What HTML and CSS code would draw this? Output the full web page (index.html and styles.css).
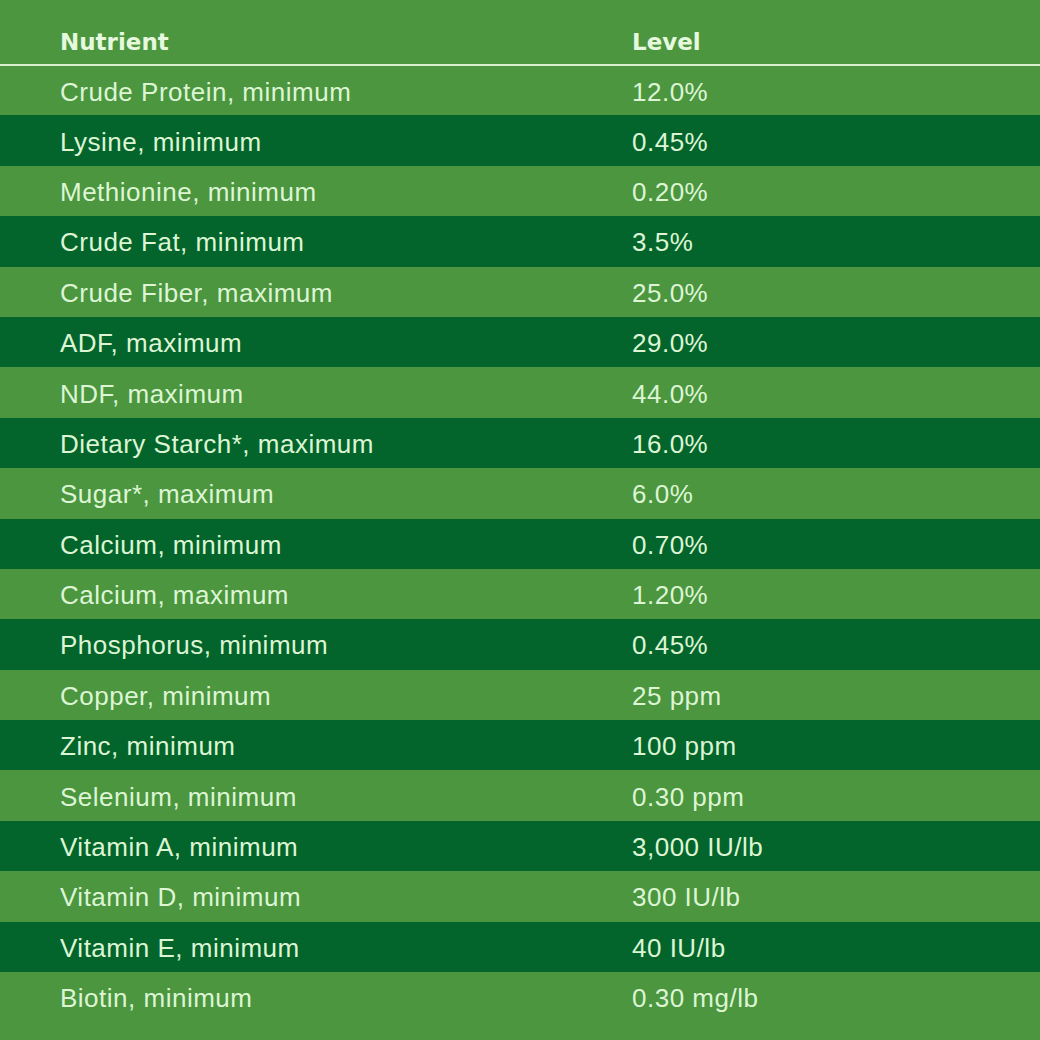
FILE: index.html
```html
<!DOCTYPE html>
<html>
<head>
<meta charset="utf-8">
<link rel="stylesheet" href="styles.css">
</head>
<body>
<table class="nutrients">
  <thead>
    <tr><th class="col-name">Nutrient</th><th class="col-level">Level</th></tr>
  </thead>
  <tbody>
    <tr><td class="col-name">Crude Protein, minimum</td><td class="col-level">12.0%</td></tr>
    <tr><td class="col-name">Lysine, minimum</td><td class="col-level">0.45%</td></tr>
    <tr><td class="col-name">Methionine, minimum</td><td class="col-level">0.20%</td></tr>
    <tr><td class="col-name">Crude Fat, minimum</td><td class="col-level">3.5%</td></tr>
    <tr><td class="col-name">Crude Fiber, maximum</td><td class="col-level">25.0%</td></tr>
    <tr><td class="col-name">ADF, maximum</td><td class="col-level">29.0%</td></tr>
    <tr><td class="col-name">NDF, maximum</td><td class="col-level">44.0%</td></tr>
    <tr><td class="col-name">Dietary Starch*, maximum</td><td class="col-level">16.0%</td></tr>
    <tr><td class="col-name">Sugar*, maximum</td><td class="col-level">6.0%</td></tr>
    <tr><td class="col-name">Calcium, minimum</td><td class="col-level">0.70%</td></tr>
    <tr><td class="col-name">Calcium, maximum</td><td class="col-level">1.20%</td></tr>
    <tr><td class="col-name">Phosphorus, minimum</td><td class="col-level">0.45%</td></tr>
    <tr><td class="col-name">Copper, minimum</td><td class="col-level">25 ppm</td></tr>
    <tr><td class="col-name">Zinc, minimum</td><td class="col-level">100 ppm</td></tr>
    <tr><td class="col-name">Selenium, minimum</td><td class="col-level">0.30 ppm</td></tr>
    <tr><td class="col-name">Vitamin A, minimum</td><td class="col-level">3,000 IU/lb</td></tr>
    <tr><td class="col-name">Vitamin D, minimum</td><td class="col-level">300 IU/lb</td></tr>
    <tr><td class="col-name">Vitamin E, minimum</td><td class="col-level">40 IU/lb</td></tr>
    <tr><td class="col-name">Biotin, minimum</td><td class="col-level">0.30 mg/lb</td></tr>
  </tbody>
</table>
</body>
</html>
```

FILE: styles.css
```css
html, body {
  margin: 0;
  padding: 0;
  background: #4b963f;
}
body {
  font-family: "Liberation Sans", Arial, sans-serif;
  color: #ddf5d4;
  height: 1040px;
  overflow: hidden;
}
.nutrients {
  width: 100%;
  border-collapse: collapse;
  table-layout: fixed;
}
.nutrients th {
  font-family: "DejaVu Sans", Verdana, sans-serif;
  font-weight: bold;
  font-size: 23px;
  text-align: left;
  vertical-align: bottom;
  height: 65px;
  padding: 0 0 9px 0;
  box-sizing: border-box;
  border-bottom: 2px solid #d9f0cf;
  color: #e6f8de;
}
.nutrients td {
  font-size: 26px;
  letter-spacing: 0.5px;
  height: 50.4px;
  padding: 2px 0 0 0;
  box-sizing: border-box;
  vertical-align: middle;
  line-height: 30px;
}
.col-name {
  width: 632px;
  padding-left: 60px !important;
  box-sizing: border-box;
}
.nutrients tbody tr:nth-child(even) {
  background: #03652b;
}
```
